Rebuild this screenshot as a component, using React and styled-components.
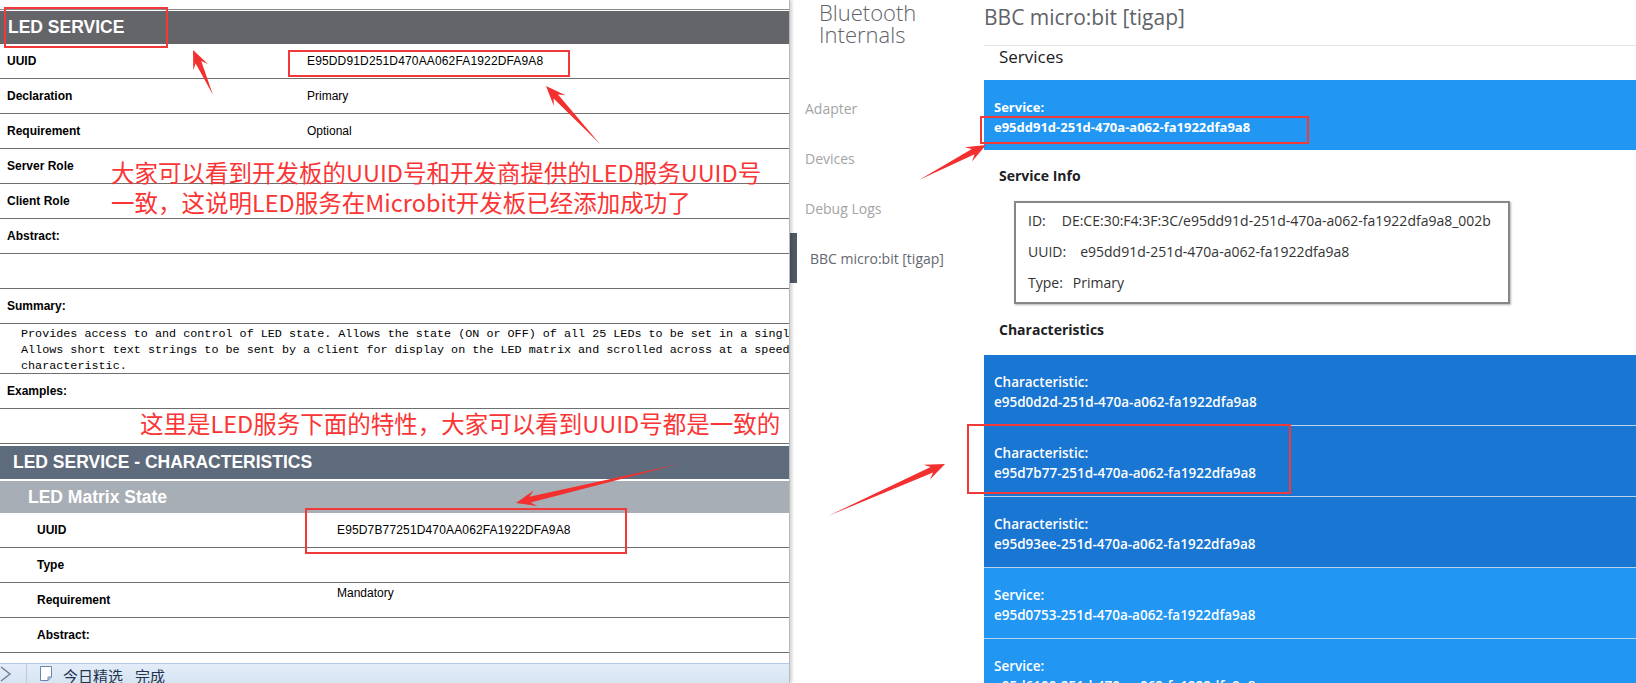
import React from 'react';
import styled, { createGlobalStyle } from 'styled-components';

const GlobalStyle = createGlobalStyle`
  html, body {
    margin: 0;
    padding: 0;
    background: #fff;
  }
  body {
    width: 1636px;
    height: 683px;
    overflow: hidden;
    font-family: "Liberation Sans", Arial, sans-serif;
  }
`;

const Page = styled.div`
  position: relative;
  display: flex;
  width: 1636px;
  height: 683px;
  overflow: hidden;
  background: #fff;
`;

/* ---------- left: the GATT spec page ---------- */

const SpecPanel = styled.div`
  position: relative;
  z-index: 1;
  flex: none;
  width: 789px;
  display: flex;
  flex-direction: column;
  border-right: 1px solid #b9b9b9;
  box-shadow: 2px 0 3px rgba(0, 0, 0, 0.18);
  font-family: "Liberation Sans", Arial, sans-serif;
  color: #000;
`;

const SpecBody = styled.div`
  flex: 1;
  overflow: hidden;
`;

const TopRule = styled.div`
  height: 9px;
  border-bottom: 1px solid #8a8a8a;
  margin-bottom: 1px;
`;

const SectionBar = styled.div`
  height: ${p => p.$h}px;
  margin-top: ${p => p.$gap || 0}px;
  display: flex;
  align-items: center;
  padding-left: ${p => p.$pad}px;
  background: ${p => p.$bg};
  color: #fff;
  font-weight: bold;
  font-size: 17.5px;
`;

const Row = styled.div`
  box-sizing: border-box;
  height: ${p => p.$h || 35}px;
  border-bottom: 1px solid #6f6f6f;
  display: grid;
  grid-template-columns: 300px 1fr;
  align-items: center;
  padding-left: ${p => 7 + (p.$indent ? 30 : 0)}px;
  font-size: 12px;
`;

const Label = styled.div`
  font-weight: bold;
`;

const Value = styled.div`
  align-self: ${p => (p.$top ? 'start' : 'center')};
  padding-top: ${p => (p.$top ? 3 : 0)}px;
  letter-spacing: ${p => (p.$code ? 0.15 : 0)}px;
`;

const SummaryText = styled.div`
  box-sizing: border-box;
  height: 50px;
  border-bottom: 1px solid #6f6f6f;
  padding: 2px 0 0 21px;
  font-family: "Liberation Mono", "Courier New", monospace;
  font-size: 11.75px;
  line-height: 16px;
  white-space: pre;
  overflow: hidden;
`;

const BottomBar = styled.div`
  flex: none;
  height: 19px;
  display: flex;
  align-items: center;
  gap: 10px;
  background: linear-gradient(#e3edf8, #d6e4f3);
  border-top: 1px solid #b3c8e2;
  font-family: "Noto Sans CJK SC", sans-serif;
  font-size: 15px;
  color: #22344d;
  overflow: hidden;
`;

const BarDivider = styled.span`
  width: 1px;
  height: 19px;
  background: #b7c9df;
  margin: 0 2px 0 4px;
`;

const BarText = styled.span`
  line-height: 19px;
  margin-top: 4px;
  margin-left: ${p => p.$ml || 0}px;
`;

/* ---------- right: chrome bluetooth internals ---------- */

const Internals = styled.div`
  flex: 1;
  min-width: 0;
  display: flex;
  font-family: "Open Sans", "Noto Sans", sans-serif;
`;

const Sidebar = styled.nav`
  flex: none;
  width: 194px;
`;

const Brand = styled.div`
  box-sizing: border-box;
  height: 83px;
  padding: 1px 0 0 29px;
  font-size: 22px;
  font-weight: 300;
  line-height: 22px;
  color: #5f6368;
`;

const NavItem = styled.div`
  height: 50px;
  display: flex;
  align-items: center;
  margin-left: ${p => (p.$active ? -1 : 0)}px;
  padding-left: ${p => (p.$active ? 13 : 15)}px;
  border-left: ${p => (p.$active ? '8px solid #505a66' : 'none')};
  color: ${p => (p.$active ? '#646970' : '#a4a4a4')};
  font-size: 14px;
`;

const Main = styled.main`
  flex: 1;
  min-width: 0;
  overflow: hidden;
`;

const PageTitle = styled.h1`
  margin: 0;
  height: 45px;
  border-bottom: 1px solid #e4e4e4;
  font-size: 21px;
  font-weight: 400;
  line-height: 34px;
  color: #5f6368;
`;

const Heading = styled.div`
  box-sizing: border-box;
  height: ${p => p.$h}px;
  display: flex;
  align-items: ${p => (p.$big ? 'flex-start' : 'center')};
  padding-left: 15px;
  font-size: ${p => (p.$big ? 17 : 14)}px;
  font-weight: ${p => (p.$big ? 400 : 700)};
  line-height: 22px;
  color: #202124;
`;

const AttrBlock = styled.div`
  box-sizing: border-box;
  height: ${p => (p.$sep ? 71 : 70)}px;
  padding: 17px 10px 0;
  border-top: ${p => (p.$sep ? '1px solid #b9d3ef' : 'none')};
  background: ${p => (p.$kind === 'char' ? '#1976d2' : '#2196f3')};
  color: #fff;
  font-size: ${p => (p.$strong ? 13 : 13.5)}px;
  font-weight: ${p => (p.$strong ? 700 : 600)};
  line-height: 20px;
`;

const InfoBox = styled.div`
  box-sizing: border-box;
  margin-left: 30px;
  width: 496px;
  height: 103px;
  padding: 2px 0 0 12px;
  border: 2px solid #878787;
  box-shadow: 1px 1px 2px rgba(0, 0, 0, 0.3);
  font-size: 14px;
  line-height: 31px;
  color: #333;
`;

const InfoLine = styled.div`
  display: flex;
  gap: ${p => p.$gap}px;
`;

/* ---------- annotations on top ---------- */

const Overlay = styled.div`
  position: absolute;
  inset: 0;
  z-index: 5;
  pointer-events: none;
`;

const RedBox = styled.div`
  position: absolute;
  left: ${p => p.$x}px;
  top: ${p => p.$y}px;
  width: ${p => p.$w}px;
  height: ${p => p.$h}px;
  box-sizing: border-box;
  border: 2px solid #f2393a;
`;

const Note = styled.div`
  position: absolute;
  left: ${p => p.$x}px;
  top: ${p => p.$y}px;
  font-family: "Noto Sans CJK SC", "Noto Sans", sans-serif;
  font-size: 23.5px;
  line-height: 30px;
  color: #fb3535;
  white-space: nowrap;
`;

const ArrowLayer = styled.svg`
  position: absolute;
  inset: 0;
`;

const arrows = [
  [213, 95, 193, 50],
  [600, 144, 546, 86],
  [919, 180, 986, 145],
  [679, 464, 516, 503],
  [828, 516, 945, 464],
];

function arrowPoints([tx, ty, hx, hy]) {
  const dx = hx - tx;
  const dy = hy - ty;
  const len = Math.hypot(dx, dy);
  const ux = dx / len;
  const uy = dy / len;
  const nx = -uy;
  const ny = ux;
  const headLen = Math.min(20, len * 0.38);
  const headW = 8;
  const shaftW = 3;
  const sx = hx - ux * headLen * 0.72;
  const sy = hy - uy * headLen * 0.72;
  const bx = hx - ux * headLen;
  const by = hy - uy * headLen;
  const pts = [
    [tx, ty],
    [sx + nx * shaftW, sy + ny * shaftW],
    [bx + nx * headW, by + ny * headW],
    [hx, hy],
    [bx - nx * headW, by - ny * headW],
    [sx - nx * shaftW, sy - ny * shaftW],
  ];
  return pts.map(p => p.map(v => v.toFixed(1)).join(',')).join(' ');
}

const serviceRows = [
  ['UUID', 'E95DD91D251D470AA062FA1922DFA9A8'],
  ['Declaration', 'Primary'],
  ['Requirement', 'Optional'],
  ['Server Role', ''],
  ['Client Role', ''],
  ['Abstract:', ''],
  ['', ''],
  ['Summary:', ''],
];

const summary = [
  'Provides access to and control of LED state. Allows the state (ON or OFF) of all 25 LEDs to be set in a single write operation.',
  'Allows short text strings to be sent by a client for display on the LED matrix and scrolled across at a speed controlled by the Scrolling Delay',
  'characteristic.',
];

const charRows = [
  ['UUID', 'E95D7B77251D470AA062FA1922DFA9A8'],
  ['Type', ''],
  ['Requirement', 'Mandatory', true],
  ['Abstract:', ''],
];

const blocks = [
  ['char', 'Characteristic:', 'e95d0d2d-251d-470a-a062-fa1922dfa9a8'],
  ['char', 'Characteristic:', 'e95d7b77-251d-470a-a062-fa1922dfa9a8'],
  ['char', 'Characteristic:', 'e95d93ee-251d-470a-a062-fa1922dfa9a8'],
  ['service', 'Service:', 'e95d0753-251d-470a-a062-fa1922dfa9a8'],
  ['service', 'Service:', 'e95d6100-251d-470a-a062-fa1922dfa9a8'],
];

export default function App() {
  return (
    <Page>
      <GlobalStyle />

      <SpecPanel>
        <SpecBody>
          <TopRule />
          <SectionBar $h={33} $pad={8} $bg="#646569">LED SERVICE</SectionBar>
          {serviceRows.map(([k, v], i) => (
            <Row key={i}>
              <Label>{k}</Label>
              <Value $code={i === 0}>{v}</Value>
            </Row>
          ))}
          <SummaryText>{summary.join('\n')}</SummaryText>
          <Row>
            <Label>Examples:</Label>
            <Value />
          </Row>
          <Row />
          <SectionBar $h={33} $gap={2} $pad={13} $bg="#5e6b7c">LED SERVICE - CHARACTERISTICS</SectionBar>
          <SectionBar $h={32} $gap={2} $pad={28} $bg="#a8aeb5">LED Matrix State</SectionBar>
          {charRows.map(([k, v, top], i) => (
            <Row key={i} $indent>
              <Label>{k}</Label>
              <Value $top={top} $code={i === 0}>{v}</Value>
            </Row>
          ))}
        </SpecBody>
        <BottomBar>
          <svg width="12" height="16" viewBox="0 0 12 16">
            <path d="M1 1 L10 8 L1 15" fill="none" stroke="#6f7f95" strokeWidth="1.5" />
          </svg>
          <BarDivider />
          <svg width="14" height="17" viewBox="0 0 14 17">
            <path d="M1.5 1.5 H12.5 V12 L9 15.5 H1.5 Z M12.5 12 H9 V15.5" fill="#fff" stroke="#6b86ab" strokeWidth="1" />
          </svg>
          <BarText>今日精选</BarText>
          <BarText $ml={2}>完成</BarText>
        </BottomBar>
      </SpecPanel>

      <Internals>
        <Sidebar>
          <Brand>
            Bluetooth
            <br />
            Internals
          </Brand>
          <NavItem>Adapter</NavItem>
          <NavItem>Devices</NavItem>
          <NavItem>Debug Logs</NavItem>
          <NavItem $active>BBC micro:bit [tigap]</NavItem>
        </Sidebar>

        <Main>
          <PageTitle>BBC micro:bit [tigap]</PageTitle>
          <Heading $h={34} $big>Services</Heading>
          <AttrBlock $kind="service" $strong>
            <div>Service:</div>
            <div>e95dd91d-251d-470a-a062-fa1922dfa9a8</div>
          </AttrBlock>
          <Heading $h={51}>Service Info</Heading>
          <InfoBox>
            <InfoLine $gap={16}>
              <span>ID:</span>
              <span>DE:CE:30:F4:3F:3C/e95dd91d-251d-470a-a062-fa1922dfa9a8_002b</span>
            </InfoLine>
            <InfoLine $gap={14}>
              <span>UUID:</span>
              <span>e95dd91d-251d-470a-a062-fa1922dfa9a8</span>
            </InfoLine>
            <InfoLine $gap={10}>
              <span>Type:</span>
              <span>Primary</span>
            </InfoLine>
          </InfoBox>
          <Heading $h={51}>Characteristics</Heading>
          {blocks.map(([kind, label, uuid], i) => (
            <AttrBlock key={i} $kind={kind} $sep={i > 0}>
              <div>{label}</div>
              <div>{uuid}</div>
            </AttrBlock>
          ))}
        </Main>
      </Internals>

      <Overlay>
        <RedBox $x={4} $y={7} $w={164} $h={41} />
        <RedBox $x={288} $y={50} $w={282} $h={27} />
        <RedBox $x={980} $y={116} $w={329} $h={28} />
        <RedBox $x={305} $y={508} $w={322} $h={46} />
        <RedBox $x={967} $y={424} $w={324} $h={70} />
        <Note $x={111} $y={157}>
          大家可以看到开发板的UUID号和开发商提供的LED服务UUID号
          <br />
          一致，这说明LED服务在Microbit开发板已经添加成功了
        </Note>
        <Note $x={140} $y={408}>这里是LED服务下面的特性，大家可以看到UUID号都是一致的</Note>
        <ArrowLayer width="1636" height="683" viewBox="0 0 1636 683">
          {arrows.map((a, i) => (
            <polygon key={i} points={arrowPoints(a)} fill="#f3302f" />
          ))}
        </ArrowLayer>
      </Overlay>
    </Page>
  );
}
